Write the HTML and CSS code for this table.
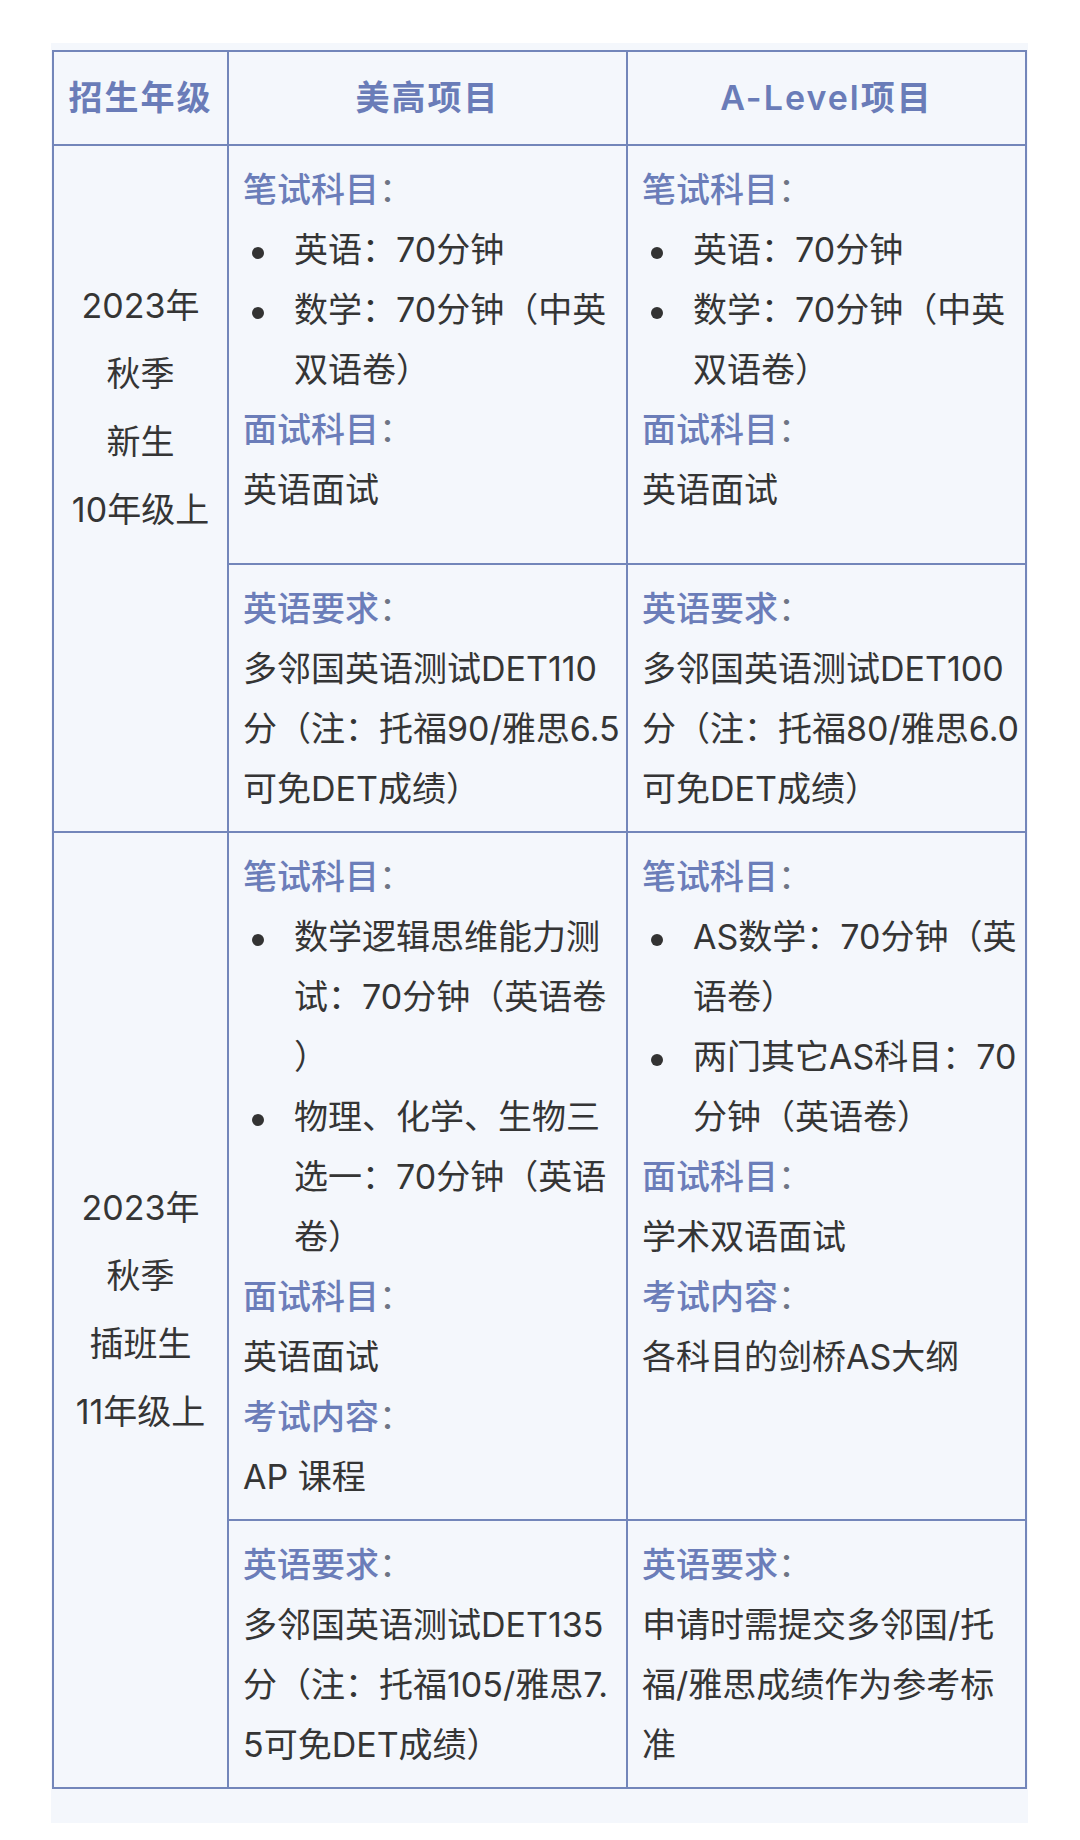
FILE: index.html
```html
<!DOCTYPE html>
<html lang="zh-CN">
<head>
<meta charset="utf-8">
<title>招生年级</title>
<link rel="stylesheet" href="styles.css">
</head>
<body>
<div class="panel">
  <table class="grid">
    <colgroup>
      <col class="c-grade">
      <col class="c-prog">
      <col class="c-prog">
    </colgroup>
    <thead>
      <tr>
        <th>招生年级</th>
        <th>美高项目</th>
        <th>A-Level项目</th>
      </tr>
    </thead>
    <tbody>
      <tr>
        <td rowspan="2" class="grade grade-raised">
          <span class="gl">2023年</span><span class="gl">秋季</span><span class="gl">新生</span><span class="gl">10年级上</span>
        </td>
        <td class="cell cell-loose">
          <p><b class="lab">笔试科目</b><span class="colon">：</span></p>
          <ul>
            <li>英语：70分钟</li>
            <li>数学：70分钟（中英双语卷）</li>
          </ul>
          <p><b class="lab">面试科目</b><span class="colon">：</span></p>
          <p>英语面试</p>
        </td>
        <td class="cell cell-loose">
          <p><b class="lab">笔试科目</b><span class="colon">：</span></p>
          <ul>
            <li>英语：70分钟</li>
            <li>数学：70分钟（中英双语卷）</li>
          </ul>
          <p><b class="lab">面试科目</b><span class="colon">：</span></p>
          <p>英语面试</p>
        </td>
      </tr>
      <tr>
        <td class="cell">
          <p><b class="lab">英语要求</b><span class="colon">：</span></p>
          <p>多邻国英语测试DET110分（注：托福90/雅思6.5可免DET成绩）</p>
        </td>
        <td class="cell">
          <p><b class="lab">英语要求</b><span class="colon">：</span></p>
          <p>多邻国英语测试DET100分（注：托福80/雅思6.0可免DET成绩）</p>
        </td>
      </tr>
      <tr>
        <td rowspan="2" class="grade">
          <span class="gl">2023年</span><span class="gl">秋季</span><span class="gl">插班生</span><span class="gl">11年级上</span>
        </td>
        <td class="cell">
          <p><b class="lab">笔试科目</b><span class="colon">：</span></p>
          <ul>
            <li>数学逻辑思维能力测试：70分钟（英语卷）</li>
            <li>物理、化学、生物三选一：70分钟（英语卷）</li>
          </ul>
          <p><b class="lab">面试科目</b><span class="colon">：</span></p>
          <p>英语面试</p>
          <p><b class="lab">考试内容</b><span class="colon">：</span></p>
          <p>AP 课程</p>
        </td>
        <td class="cell">
          <p><b class="lab">笔试科目</b><span class="colon">：</span></p>
          <ul>
            <li>AS数学：70分钟（英语卷）</li>
            <li>两门其它AS科目：70分钟（英语卷）</li>
          </ul>
          <p><b class="lab">面试科目</b><span class="colon">：</span></p>
          <p>学术双语面试</p>
          <p><b class="lab">考试内容</b><span class="colon">：</span></p>
          <p>各科目的剑桥AS大纲</p>
        </td>
      </tr>
      <tr>
        <td class="cell">
          <p><b class="lab">英语要求</b><span class="colon">：</span></p>
          <p>多邻国英语测试DET135分（注：托福105/雅思7.5可免DET成绩）</p>
        </td>
        <td class="cell">
          <p><b class="lab">英语要求</b><span class="colon">：</span></p>
          <p>申请时需提交多邻国/托福/雅思成绩作为参考标准</p>
        </td>
      </tr>
    </tbody>
  </table>
</div>
</body>
</html>
```

FILE: styles.css
```css
html, body {
  margin: 0;
  padding: 0;
  background: #ffffff;
}

body {
  font-family: "Inter", "Noto Sans CJK SC", sans-serif;
  color: #353535;
}

.panel {
  width: 977px;
  margin: 43px 0 0 51px;
  padding: 7px 0 34px 1px;
  box-sizing: border-box;
  background: #f4f7fc;
}

.grid {
  width: 975px;
  table-layout: fixed;
  border-collapse: collapse;
  border: 2px solid #7386ba;
  font-size: 34px;
  line-height: 60px;
}

.c-grade { width: 175px; }
.c-prog { width: 399px; }

.grid th,
.grid td {
  border: 2px solid #7386ba;
}

.grid th {
  padding: 16px 4px;
  font-weight: 600;
  color: #6a7cb8;
  letter-spacing: 2px;
  text-align: center;
}

.grade {
  text-align: center;
  vertical-align: middle;
  line-height: 68px;
  padding: 0 4px;
}

.grade-raised {
  padding-bottom: 162px;
}

.gl {
  display: block;
}

.cell {
  vertical-align: top;
  padding: 14px 4px 12px 14px;
  line-break: anywhere;
  word-break: break-all;
}

.cell-loose {
  padding-bottom: 43px;
}

.cell p {
  margin: 0;
}

.lab {
  font-weight: 500;
  color: #6b7db9;
}

.colon {
  color: #6f7585;
}

.cell ul {
  margin: 0;
  padding: 0;
  list-style: none;
}

.cell li {
  padding-left: 51px;
}

.cell li::before {
  content: "";
  display: inline-block;
  width: 12px;
  height: 12px;
  border-radius: 50%;
  background: #333333;
  margin-left: -42px;
  margin-right: 30px;
  vertical-align: middle;
}
```
